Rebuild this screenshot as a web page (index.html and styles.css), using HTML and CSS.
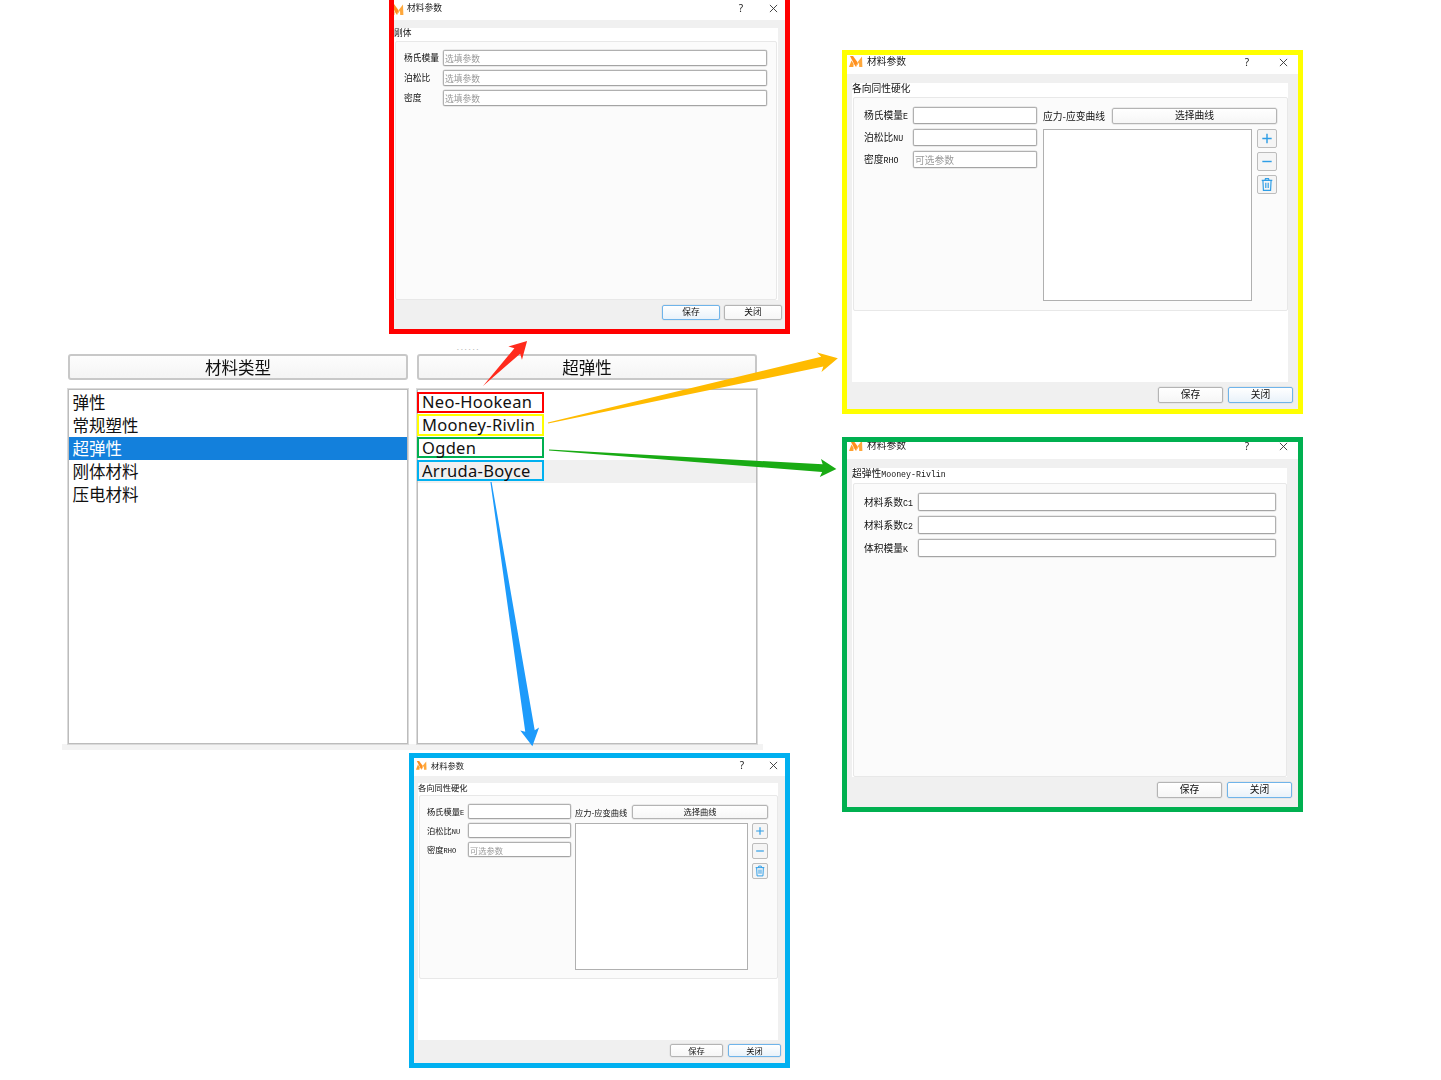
FILE: index.html
```html
<!DOCTYPE html>
<html lang="zh-CN">
<head>
<meta charset="utf-8">
<title>材料参数</title>
<link rel="stylesheet" href="styles.css">
</head>
<body>
<div class="canvas">

  <svg width="0" height="0" class="defs">
    <defs>
      <g id="logo">
        <polygon points="0,11 2.5,4.5 4.6,8 4.4,11" fill="#ffa02e"/>
        <polygon points="1,0 4,0 8.5,6.2 7,11 5.6,9" fill="#ff8f1f"/>
        <polygon points="8.5,6.2 13,0.5 13.4,11 10.2,11 10,6.5 7,11" fill="#ffa83c"/>
      </g>
      <g id="close"><path d="M1 1L9 9M9 1L1 9" fill="none" stroke="#333" stroke-width="1"/></g>
      <g id="plus"><path d="M4.5 10H15.5M10 4.5V15.5" fill="none" stroke="#2f9ee6" stroke-width="1.7"/></g>
      <g id="minus"><path d="M4.5 10H15.5" fill="none" stroke="#2f9ee6" stroke-width="1.7"/></g>
      <g id="trash"><path d="M3.8 5.2H16.2M7.6 5.2L8.2 3H11.8L12.4 5.2M5.2 5.2L5.8 17H14.2L14.8 5.2M8.6 8V14M11.4 8V14" fill="none" stroke="#2f9ee6" stroke-width="1.4"/></g>
    </defs>
  </svg>

  <main class="selector">
    <div class="splitter-dots">......</div>
    <div class="selector-columns">
      <section class="column">
        <h2 class="column-header">材料类型</h2>
        <ul class="list">
          <li class="row">弹性</li>
          <li class="row">常规塑性</li>
          <li class="row row-selected">超弹性</li>
          <li class="row">刚体材料</li>
          <li class="row">压电材料</li>
        </ul>
      </section>
      <section class="column">
        <h2 class="column-header">超弹性</h2>
        <ul class="list">
          <li class="row row-marked"><span class="mark mark-red">Neo-Hookean</span></li>
          <li class="row row-marked"><span class="mark mark-yellow">Mooney-Rivlin</span></li>
          <li class="row row-marked"><span class="mark mark-green">Ogden</span></li>
          <li class="row row-marked row-hover"><span class="mark mark-blue">Arruda-Boyce</span></li>
        </ul>
      </section>
    </div>
    <div class="selector-strip"></div>
  </main>

  <!-- Rigid body dialog -->
  <article class="window win-red">
    <header class="titlebar">
      <svg class="logo" viewBox="0 0 14 11.5"><use href="#logo"/></svg>
      <span class="title">材料参数</span>
      <span class="help">?</span>
      <svg class="close" viewBox="0 0 10 10"><use href="#close"/></svg>
    </header>
    <div class="panel">
      <div class="group-title">刚体</div>
      <div class="group-box">
        <div class="fields">
          <label class="field-label">杨氏模量</label><input class="input" placeholder="选填参数">
          <label class="field-label">泊松比</label><input class="input" placeholder="选填参数">
          <label class="field-label">密度</label><input class="input" placeholder="选填参数">
        </div>
      </div>
    </div>
    <footer class="footer">
      <button class="btn btn-focus">保存</button>
      <button class="btn">关闭</button>
    </footer>
  </article>

  <!-- Isotropic hardening dialog (large) -->
  <article class="window win-yellow">
    <header class="titlebar">
      <svg class="logo" viewBox="0 0 14 11.5"><use href="#logo"/></svg>
      <span class="title">材料参数</span>
      <span class="help">?</span>
      <svg class="close" viewBox="0 0 10 10"><use href="#close"/></svg>
    </header>
    <div class="panel">
      <div class="group-title">各向同性硬化</div>
      <div class="group-box">
        <div class="split">
          <div class="fields">
            <label class="field-label">杨氏模量<span class="latin">E</span></label><input class="input">
            <label class="field-label">泊松比<span class="latin">NU</span></label><input class="input">
            <label class="field-label">密度<span class="latin">RHO</span></label><input class="input" placeholder="可选参数">
          </div>
          <div class="curve">
            <div class="curve-head">
              <span class="curve-label">应力-应变曲线</span>
              <button class="btn btn-curve">选择曲线</button>
            </div>
            <div class="curve-body">
              <div class="curve-list"></div>
              <div class="tools">
                <button class="tool"><svg viewBox="0 0 20 20"><use href="#plus"/></svg></button>
                <button class="tool"><svg viewBox="0 0 20 20"><use href="#minus"/></svg></button>
                <button class="tool"><svg viewBox="0 0 20 20"><use href="#trash"/></svg></button>
              </div>
            </div>
          </div>
        </div>
      </div>
    </div>
    <footer class="footer">
      <button class="btn">保存</button>
      <button class="btn btn-focus">关闭</button>
    </footer>
  </article>

  <!-- Mooney-Rivlin dialog -->
  <article class="window win-green">
    <header class="titlebar">
      <svg class="logo" viewBox="0 0 14 11.5"><use href="#logo"/></svg>
      <span class="title">材料参数</span>
      <span class="help">?</span>
      <svg class="close" viewBox="0 0 10 10"><use href="#close"/></svg>
    </header>
    <div class="panel">
      <div class="group-title">超弹性<span class="latin">Mooney-Rivlin</span></div>
      <div class="group-box">
        <div class="fields">
          <label class="field-label">材料系数<span class="latin">C1</span></label><input class="input">
          <label class="field-label">材料系数<span class="latin">C2</span></label><input class="input">
          <label class="field-label">体积模量<span class="latin">K</span></label><input class="input">
        </div>
      </div>
    </div>
    <footer class="footer">
      <button class="btn">保存</button>
      <button class="btn btn-focus">关闭</button>
    </footer>
  </article>

  <!-- Isotropic hardening dialog (small) -->
  <article class="window win-blue">
    <header class="titlebar">
      <svg class="logo" viewBox="0 0 14 11.5"><use href="#logo"/></svg>
      <span class="title">材料参数</span>
      <span class="help">?</span>
      <svg class="close" viewBox="0 0 10 10"><use href="#close"/></svg>
    </header>
    <div class="panel">
      <div class="group-title">各向同性硬化</div>
      <div class="group-box">
        <div class="split">
          <div class="fields">
            <label class="field-label">杨氏模量<span class="latin">E</span></label><input class="input">
            <label class="field-label">泊松比<span class="latin">NU</span></label><input class="input">
            <label class="field-label">密度<span class="latin">RHO</span></label><input class="input" placeholder="可选参数">
          </div>
          <div class="curve">
            <div class="curve-head">
              <span class="curve-label">应力-应变曲线</span>
              <button class="btn btn-curve">选择曲线</button>
            </div>
            <div class="curve-body">
              <div class="curve-list"></div>
              <div class="tools">
                <button class="tool"><svg viewBox="0 0 20 20"><use href="#plus"/></svg></button>
                <button class="tool"><svg viewBox="0 0 20 20"><use href="#minus"/></svg></button>
                <button class="tool"><svg viewBox="0 0 20 20"><use href="#trash"/></svg></button>
              </div>
            </div>
          </div>
        </div>
      </div>
    </div>
    <footer class="footer">
      <button class="btn">保存</button>
      <button class="btn btn-focus">关闭</button>
    </footer>
  </article>

  <!-- Annotation arrows -->
  <svg class="arrows" viewBox="0 0 1441 1080">
    <g transform="translate(483 386) rotate(-45.6)">
      <polygon points="0,0 49,-4 46,-9.5 63,0 46,9.5 49,4" fill="#ff2a1c"/>
    </g>
    <g transform="translate(548 423) rotate(-12.6)">
      <polygon points="0,-0.6 281,-5 278,-10 297,0 278,10 281,5 0,0.6" fill="#ffbb00"/>
    </g>
    <g transform="translate(549 450) rotate(3.8)">
      <polygon points="0,-0.6 274,-3.8 272,-9 288,0 272,9 274,3.8 0,0.6" fill="#19ab14"/>
    </g>
    <g transform="translate(491 482) rotate(81.1)">
      <polygon points="0,-0.6 252,-4.8 250,-9.5 267.5,0 250,9.5 252,4.8 0,0.6" fill="#1d9bfb"/>
    </g>
  </svg>
</div>
</body>
</html>
```

FILE: styles.css
```css
* { box-sizing: border-box; }

html, body {
  margin: 0;
  padding: 0;
  background: #fff;
}

.canvas {
  position: relative;
  width: 1441px;
  height: 1080px;
  overflow: hidden;
  font-family: "Noto Sans CJK SC", "Noto Sans", sans-serif;
  color: #222;
}

.defs { position: absolute; }

/* ---------- Material selector ---------- */
.selector {
  position: absolute;
  left: 62px;
  top: 341px;
  width: 701px;
}

.splitter-dots {
  height: 13px;
  font-size: 8px;
  line-height: 12px;
  letter-spacing: 1.7px;
  text-align: center;
  color: #b5b5b5;
  padding-left: 112px;
}

.selector-columns {
  display: flex;
  gap: 9px;
  padding: 0 6px;
}

.column {
  display: flex;
  flex-direction: column;
  gap: 9px;
  width: 340px;
}

.column-header {
  margin: 0;
  height: 26px;
  border: 2px solid #c8c8c8;
  border-radius: 3px;
  background: linear-gradient(#fdfdfd, #f4f4f4);
  font-size: 16.5px;
  font-weight: 400;
  line-height: 22px;
  text-align: center;
  color: #111;
  filter: blur(0.25px);
}

.list {
  list-style: none;
  margin: 0;
  padding: 1px 0 0;
  height: 355px;
  border: 1px solid #bcbcbc;
  box-shadow: 0 0 0 1px #dadada;
  background: #fff;
}

.row {
  height: 23px;
  padding-left: 3.5px;
  font-size: 16.5px;
  line-height: 22px;
  color: #111;
}

.row-selected {
  background: #1380dc;
  color: #fff;
}

.row-marked { padding-left: 0; }
.row-hover { background: #f0f0f0; }

.mark {
  display: block;
  width: 127px;
  height: 21px;
  margin-left: -1px;
  padding-left: 3px;
  border: 2px solid;
  line-height: 18px;
  letter-spacing: 0.3px;
  font-family: "Noto Sans", sans-serif;
  white-space: nowrap;
}

.mark-red { border-color: #f00; position: relative; top: 1px; line-height: 16px; }
.mark-yellow { border-color: #ff0; height: 22px; }
.mark-green { border-color: #00b050; }
.mark-blue { border-color: #00b0f0; }

.selector-strip {
  height: 6px;
  background: #f3f3f3;
}

/* ---------- Dialog windows ---------- */
.window {
  position: absolute;
  display: flex;
  flex-direction: column;
  border: 5px solid;
  background: #f0f0f0;
  overflow: hidden;
  font-size: var(--fs);
}

.win-red {
  --fs: 8.75px; --title-h: 20px; --title-up: 4px; --gap: 8px; --panel-l: 0px; --panel-r: 7px;
  --head-h: 13px; --head-lh: 10px; --foot-h: 29px; --foot-t: 5px; --btn-w: 58px; --btn-h: 15px; --foot-r: 3px; --foot-gap: 4px;
  --logo-w: 14px; --pad-l: -4px; --logo-r: 3px; --logo-t: 4px; --close-r: 7px; --help-gap: 26px;
  --label-w: 39px; --input-h: 16px; --row-gap: 4px;
  left: 389px; top: -5px; width: 401px; height: 339px;
  border-color: #f00;
}

.win-yellow {
  --fs: 9.75px; --title-h: 19px; --title-up: 5px; --gap: 9px; --panel-l: 5px; --panel-r: 10px;
  --head-h: 14px; --head-lh: 11px; --foot-h: 27px; --foot-t: 5px; --btn-w: 65px; --btn-h: 16px; --foot-r: 5px; --foot-gap: 5px;
  --logo-w: 14px; --pad-l: 2px; --logo-r: 4px; --logo-t: 0px; --close-r: 10px; --help-gap: 30px;
  --label-w: 49px; --input-h: 17px; --row-gap: 5px; --label-t: 1px;
  --left-w: 173px; --split-gap: 6px; --curve-label-w: 69px; --curve-h: 172px; --tool-w: 20px; --tool-h: 19px; --tool-gap: 4px;
  left: 842px; top: 50px; width: 461px; height: 364px;
  border-color: #ff0;
}

.win-green {
  --fs: 9.75px; --title-h: 17px; --title-up: 9px; --gap: 9px; --panel-l: 5px; --panel-r: 11px;
  --head-h: 15px; --head-lh: 11px; --foot-h: 30px; --foot-t: 5px; --btn-w: 65px; --btn-h: 16px; --foot-r: 6px; --foot-gap: 5px;
  --logo-w: 14px; --pad-l: 2px; --logo-r: 4px; --logo-t: 0px; --close-r: 10px; --help-gap: 30px;
  --label-w: 54px; --input-h: 18px; --row-gap: 5px; --label-t: 2px;
  left: 842px; top: 437px; width: 461px; height: 375px;
  border-color: #00b050;
}

.win-blue {
  --fs: 8.25px; --title-h: 18px; --title-up: 4px; --gap: 7px; --panel-l: 4px; --panel-r: 7px;
  --head-h: 12px; --head-lh: 9px; --foot-h: 23px; --foot-t: 4px; --btn-w: 53px; --btn-h: 13px; --foot-r: 4px; --foot-gap: 5px;
  --logo-w: 11px; --pad-l: 2px; --logo-r: 4px; --logo-t: 2px; --close-r: 7px; --help-gap: 25px;
  --label-w: 41px; --input-h: 15px; --row-gap: 4px; --label-t: 1px;
  --left-w: 144px; --split-gap: 4px; --curve-label-w: 57px; --curve-h: 147px; --tool-w: 16px; --tool-h: 16px; --tool-gap: 4px;
  left: 409px; top: 753px; width: 381px; height: 315px;
  border-color: #00b0f0;
}

.titlebar, .panel, .footer { filter: blur(0.35px); }

.titlebar {
  flex: none;
  display: flex;
  align-items: center;
  height: var(--title-h);
  padding: 0 var(--close-r) var(--title-up) 0;
  background: #fff;
}

.logo {
  flex: none;
  width: var(--logo-w);
  margin: var(--logo-t) var(--logo-r) 0 var(--pad-l);
}

.title {
  flex: 1;
  color: #222;
  line-height: 1;
}

.help {
  font-family: "Noto Sans", sans-serif;
  font-size: 10px;
  line-height: 1;
  color: #222;
  margin-right: var(--help-gap);
}

.close {
  flex: none;
  width: 9px;
  height: 9px;
}

.panel {
  flex: 1;
  display: flex;
  flex-direction: column;
  margin: var(--gap) var(--panel-r) 0 var(--panel-l);
  background: #fff;
  min-height: 0;
}

.group-title {
  flex: none;
  height: var(--head-h);
  line-height: var(--head-lh);
  color: #111;
  white-space: nowrap;
}

.latin {
  font-family: "Liberation Mono", monospace;
  font-size: 0.85em;
}

.group-box {
  margin-left: 1px;
  padding: 9px 10px 10px 10px;
  background: #fbfbfb;
  border: 1px solid #e8e8e8;
  border-radius: 2px;
}

.win-red .group-box { flex: 1; padding: 8px 9px 8px 8px; margin-right: 1px; }
.win-green .group-box { flex: 1; }
.win-yellow .group-box { height: 214px; }
.win-blue .group-box { height: 184px; padding: 8px 9px 8px 7px; }

.split {
  display: grid;
  grid-template-columns: var(--left-w) 1fr;
  column-gap: var(--split-gap);
  align-items: start;
}

.fields {
  display: grid;
  grid-template-columns: var(--label-w) 1fr;
  row-gap: var(--row-gap);
  align-items: center;
}

.field-label {
  color: #111;
  white-space: nowrap;
  line-height: 1;
  padding-top: var(--label-t, 0);
}

.input {
  width: 100%;
  min-width: 0;
  height: var(--input-h);
  padding: 0 1px;
  margin: 0;
  font: inherit;
  color: #222;
  background: #fff;
  border: 1px solid #b0b0b0;
  border-bottom-color: #a4a4a4;
  border-radius: 2px;
  box-shadow: 0 0 0 0.5px #d8d8d8;
  outline: none;
}

.input::placeholder { color: #9a9a9a; opacity: 1; }

.curve {
  display: flex;
  flex-direction: column;
  gap: var(--row-gap);
}

.curve-head {
  display: flex;
  align-items: center;
  height: var(--input-h);
}

.curve-label {
  flex: none;
  width: var(--curve-label-w);
  white-space: nowrap;
  color: #111;
}

.curve-body {
  display: flex;
  gap: 5px;
  height: var(--curve-h);
}

.win-blue .curve-body { gap: 4px; }

.curve-list {
  flex: 1;
  background: #fff;
  border: 1px solid #b0b0b0;
}

.tools {
  flex: none;
  display: flex;
  flex-direction: column;
  gap: var(--tool-gap);
  width: var(--tool-w);
}

.tool {
  display: block;
  width: var(--tool-w);
  height: var(--tool-h);
  padding: 0;
  background: #f5f5f5;
  border: 1px solid #bcbcbc;
  border-radius: 2px;
}

.tool svg {
  display: block;
  width: 100%;
  height: 100%;
}

.footer {
  flex: none;
  display: flex;
  justify-content: flex-end;
  align-items: flex-start;
  gap: var(--foot-gap);
  height: var(--foot-h);
  padding: var(--foot-t) var(--foot-r) 0 0;
}

.btn {
  width: var(--btn-w);
  height: var(--btn-h);
  padding: 0;
  font: inherit;
  line-height: 1;
  color: #111;
  background: linear-gradient(#fff, #f6f6f6);
  border: 1px solid #b4b4b4;
  border-radius: 2px;
  box-shadow: 0 0 0 0.5px #dcdcdc;
}

.btn-focus {
  border-color: #6fb4ea;
  background: linear-gradient(#fff, #e9f2fa);
}

.btn-curve {
  flex: 1;
  width: auto;
  height: calc(var(--input-h) - 1px);
}

/* ---------- Arrows ---------- */
.arrows {
  position: absolute;
  left: 0;
  top: 0;
  width: 1441px;
  height: 1080px;
  pointer-events: none;
}
```
